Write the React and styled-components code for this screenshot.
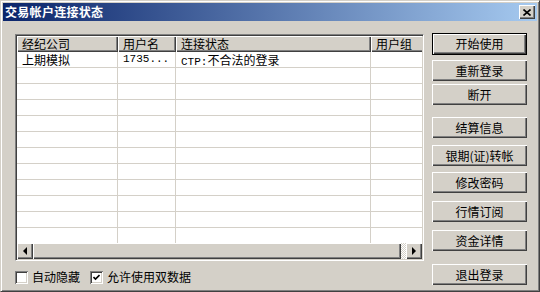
import React from 'react';
import styled, { createGlobalStyle, css } from 'styled-components';

const GlobalStyle = createGlobalStyle`
	html, body {
		margin: 0;
		padding: 0;
		background: #d4d0c8;
	}
	body {
		font-family: "Noto Sans CJK SC", "Liberation Sans", sans-serif;
		font-size: 12px;
		color: #000;
	}
`;

const raised = css`
	box-shadow: inset 1px 1px #fff, inset -1px -1px #404040, inset -2px -2px #808080;
`;

const Window = styled.div`
	width: 540px;
	height: 292px;
	box-sizing: border-box;
	background: #d4d0c8;
	border: 1px solid;
	border-color: #d4d0c8 #404040 #404040 #d4d0c8;
	box-shadow: inset 1px 1px #fff, inset -1px -1px #808080;
	padding: 2px;
	display: flex;
	flex-direction: column;
	overflow: hidden;
`;

const TitleBar = styled.div`
	height: 18px;
	flex-shrink: 0;
	display: flex;
	align-items: center;
	justify-content: space-between;
	padding: 0 2px;
	background: linear-gradient(to right, #0a246a, #a6caf0);
`;

const Title = styled.span`
	color: #fff;
	font-weight: bold;
	font-size: 12px;
	line-height: 18px;
	letter-spacing: 0.3px;
`;

const CloseBtn = styled.div`
	width: 16px;
	height: 14px;
	background: #d4d0c8;
	${raised};
	display: flex;
	align-items: center;
	justify-content: center;
`;

const Body = styled.div`
	display: flex;
	gap: 8px;
	padding: 12px 10px 0 12px;
`;

const LeftCol = styled.div`
	width: 409px;
	display: flex;
	flex-direction: column;
`;

const List = styled.div`
	margin-top: 1px;
	height: 227px;
	box-sizing: border-box;
	border: 1px solid;
	border-color: #808080 #fff #fff #808080;
	box-shadow: inset 1px 1px #404040, inset -1px -1px #d4d0c8;
	padding: 1px;
	background: #fff;
	display: flex;
	flex-direction: column;
	overflow: hidden;
`;

const Header = styled.div`
	display: flex;
	height: 16px;
	flex-shrink: 0;
	overflow: hidden;
`;

const HeaderCell = styled.div`
	width: ${(p) => p.$w}px;
	flex-shrink: 0;
	box-sizing: border-box;
	background: #d4d0c8;
	${raised};
	padding-left: 5px;
	line-height: 16px;
	white-space: nowrap;
	overflow: hidden;
`;

const Rows = styled.div`
	flex: 1;
	overflow: hidden;
`;

const Row = styled.div`
	display: flex;
	height: 16px;
`;

const Cell = styled.div`
	width: ${(p) => p.$w}px;
	flex-shrink: 0;
	box-sizing: border-box;
	border-right: 1px solid #d4d0c8;
	border-bottom: 1px solid #d4d0c8;
	padding-left: 5px;
	line-height: 15px;
	white-space: nowrap;
	overflow: hidden;
	font-family: ${(p) => (p.$mono ? '"Liberation Mono", "Noto Sans CJK SC", monospace' : 'inherit')};
	font-size: ${(p) => (p.$mono ? '11px' : '12px')};
`;

const Cjk = styled.span`
	font-family: "Noto Sans CJK SC", sans-serif;
	font-size: 12px;
`;

const ScrollBar = styled.div`
	display: flex;
	height: 16px;
	flex-shrink: 0;
`;

const ArrowBtn = styled.div`
	width: 16px;
	height: 16px;
	flex-shrink: 0;
	background: #d4d0c8;
	${raised};
	display: flex;
	align-items: center;
	justify-content: center;
`;

const Thumb = styled.div`
	flex: 1;
	background: #d4d0c8;
	${raised};
`;

const Track = styled.div`
	width: 5px;
	background-color: #d4d0c8;
	background-image: linear-gradient(45deg, #fff 25%, transparent 25%, transparent 75%, #fff 75%),
		linear-gradient(45deg, #fff 25%, transparent 25%, transparent 75%, #fff 75%);
	background-size: 2px 2px;
	background-position: 0 0, 1px 1px;
`;

const CheckRow = styled.div`
	margin-top: 9px;
	display: flex;
	align-items: center;
	height: 14px;
`;

const CheckBox = styled.div`
	width: 13px;
	height: 13px;
	box-sizing: border-box;
	background: #fff;
	box-shadow: inset 1px 1px #808080, inset -1px -1px #fff, inset 2px 2px #404040, inset -2px -2px #d4d0c8;
	margin-left: ${(p) => p.$ml || 0}px;
	display: flex;
	align-items: center;
	justify-content: center;
`;

const CheckLabel = styled.span`
	margin-left: 4px;
	line-height: 14px;
`;

const RightCol = styled.div`
	width: 95px;
	display: flex;
	flex-direction: column;
`;

const Button = styled.div`
	margin-top: ${(p) => p.$mt}px;
	height: ${(p) => (p.$default ? 22 : 21)}px;
	box-sizing: border-box;
	background: #d4d0c8;
	${raised};
	border: ${(p) => (p.$default ? '1px solid #000' : 'none')};
	display: flex;
	align-items: center;
	justify-content: center;
	line-height: 1;
	white-space: nowrap;
`;

const cols = [101, 58, 195, 80];
const headers = ['经纪公司', '用户名', '连接状态', '用户组'];

const buttons = [
	{ label: '开始使用', mt: 0, def: true },
	{ label: '重新登录', mt: 5 },
	{ label: '断开', mt: 3 },
	{ label: '结算信息', mt: 12 },
	{ label: '银期(证)转帐', mt: 7 },
	{ label: '修改密码', mt: 6 },
	{ label: '行情订阅', mt: 8 },
	{ label: '资金详情', mt: 8 },
	{ label: '退出登录', mt: 13 },
];

function Tri({ dir }) {
	const pts = dir === 'left' ? '5,0 1,4 5,8' : '1,0 5,4 1,8';
	return (
		<svg width="6" height="8" viewBox="0 0 6 8">
			<polygon points={pts} fill="#000" />
		</svg>
	);
}

export default function App() {
	const emptyRows = Array.from({ length: 11 });

	return (
		<>
			<GlobalStyle />
			<Window>
				<TitleBar>
					<Title>交易帐户连接状态</Title>
					<CloseBtn>
						<svg width="8" height="7" viewBox="0 0 8 7">
							<path d="M0.5 0.5 L7.5 6.5 M7.5 0.5 L0.5 6.5" stroke="#000" strokeWidth="1.6" />
						</svg>
					</CloseBtn>
				</TitleBar>
				<Body>
					<LeftCol>
						<List>
							<Header>
								{headers.map((h, i) => (
									<HeaderCell key={h} $w={cols[i]}>
										{h}
									</HeaderCell>
								))}
							</Header>
							<Rows>
								<Row>
									<Cell $w={cols[0]}>上期模拟</Cell>
									<Cell $w={cols[1]} $mono>
										1735...
									</Cell>
									<Cell $w={cols[2]} $mono>
										CTP:<Cjk>不合法的登录</Cjk>
									</Cell>
									<Cell $w={cols[3]} />
								</Row>
								{emptyRows.map((_, r) => (
									<Row key={r}>
										{cols.map((w, i) => (
											<Cell key={i} $w={w} />
										))}
									</Row>
								))}
							</Rows>
							<ScrollBar>
								<ArrowBtn>
									<Tri dir="left" />
								</ArrowBtn>
								<Thumb />
								<Track />
								<ArrowBtn>
									<Tri dir="right" />
								</ArrowBtn>
							</ScrollBar>
						</List>
						<CheckRow>
							<CheckBox />
							<CheckLabel>自动隐藏</CheckLabel>
							<CheckBox $ml={10}>
								<svg width="7" height="7" viewBox="0 0 7 7">
									<path d="M0.5 3 L2.5 5 L6.5 1" stroke="#000" strokeWidth="1.6" fill="none" />
								</svg>
							</CheckBox>
							<CheckLabel>允许使用双数据</CheckLabel>
						</CheckRow>
					</LeftCol>
					<RightCol>
						{buttons.map((b) => (
							<Button key={b.label} $mt={b.mt} $default={b.def}>
								{b.label}
							</Button>
						))}
					</RightCol>
				</Body>
			</Window>
		</>
	);
}
